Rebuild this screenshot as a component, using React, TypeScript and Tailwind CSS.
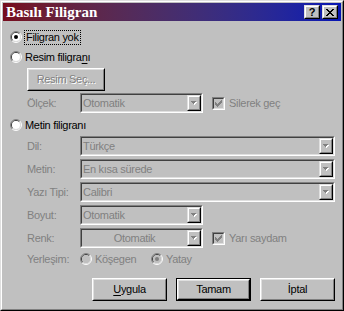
import React from "react";

function Radio({ checked = false, disabled = false }: { checked?: boolean; disabled?: boolean }) {
  const fill = disabled ? "#c0c0c0" : "#ffffff";
  const dot = disabled ? "#808080" : "#000000";
  return (
    <svg width="12" height="12" viewBox="0 0 12 12" className="shrink-0 block">
      <path d="M2.111 9.889 A5.5 5.5 0 0 1 9.889 2.111" stroke="#808080" fill="none" />
      <path d="M9.889 2.111 A5.5 5.5 0 0 1 2.111 9.889" stroke="#ffffff" fill="none" />
      <path d="M2.818 9.182 A4.5 4.5 0 0 1 9.182 2.818" stroke="#404040" fill="none" />
      <path d="M9.182 2.818 A4.5 4.5 0 0 1 2.818 9.182" stroke="#dfdfdf" fill="none" />
      <circle cx="6" cy="6" r="4" fill={fill} />
      {checked && <circle cx="6" cy="6" r="2" fill={dot} />}
    </svg>
  );
}

function CheckBox({ checked = false }: { checked?: boolean }) {
  const px: [number, number, number][] = [
    [6, 0, 1],
    [5, 1, 2],
    [0, 2, 1],
    [4, 2, 3],
    [0, 3, 2],
    [3, 3, 3],
    [0, 4, 5],
    [1, 5, 3],
    [2, 6, 1],
  ];
  return (
    <div className="w-[13px] h-[13px] shrink-0 border border-t-[#808080] border-l-[#808080] border-r-white border-b-white">
      <div className="w-full h-full border border-t-[#404040] border-l-[#404040] border-r-[#dfdfdf] border-b-[#dfdfdf] bg-[#c0c0c0] flex items-center justify-center">
        {checked && (
          <svg width="7" height="7" viewBox="0 0 7 7" className="block" shapeRendering="crispEdges">
            {px.map(([x, y, w], i) => (
              <rect key={i} x={x} y={y} width={w} height={1} fill="#808080" />
            ))}
          </svg>
        )}
      </div>
    </div>
  );
}

function DropArrow() {
  return (
    <svg width="6" height="4" viewBox="0 0 6 4" className="block" shapeRendering="crispEdges">
      <rect x="1" y="1" width="5" height="1" fill="#ffffff" />
      <rect x="2" y="2" width="3" height="1" fill="#ffffff" />
      <rect x="3" y="3" width="1" height="1" fill="#ffffff" />
      <rect x="0" y="0" width="5" height="1" fill="#808080" />
      <rect x="1" y="1" width="3" height="1" fill="#808080" />
      <rect x="2" y="2" width="1" height="1" fill="#808080" />
    </svg>
  );
}

function Combo({ value, wide = false, center = false }: { value: string; wide?: boolean; center?: boolean }) {
  return (
    <div
      className={`${wide ? "w-[255px]" : "w-[123px]"} h-[20px] shrink-0 border border-t-[#808080] border-l-[#808080] border-r-white border-b-white`}
    >
      <div className="w-full h-full flex border border-t-[#404040] border-l-[#404040] border-r-[#dfdfdf] border-b-[#dfdfdf] bg-[#c0c0c0]">
        <div
          className={`flex-1 flex items-center text-[#808080] leading-none ${center ? "justify-center" : "pl-[1px]"}`}
        >
          {value}
        </div>
        <div className="w-[14px] h-full border border-t-[#dfdfdf] border-l-[#dfdfdf] border-r-black border-b-black">
          <div className="w-full h-full border border-t-white border-l-white border-r-[#808080] border-b-[#808080] flex items-center justify-center">
            <DropArrow />
          </div>
        </div>
      </div>
    </div>
  );
}

function PushButton({ children, def = false }: { children: React.ReactNode; def?: boolean }) {
  const inner = (
    <div className="w-full h-full border border-t-white border-l-white border-r-black border-b-black">
      <div className="w-full h-full border border-t-[#dfdfdf] border-l-[#dfdfdf] border-r-[#808080] border-b-[#808080] flex items-center justify-center text-black">
        {children}
      </div>
    </div>
  );
  if (def) {
    return <div className="w-[75px] h-[23px] border border-black">{inner}</div>;
  }
  return <div className="w-[75px] h-[23px]">{inner}</div>;
}

function TitleBtn({ children }: { children: React.ReactNode }) {
  return (
    <div className="w-[16px] h-[14px] border border-t-[#dfdfdf] border-l-[#dfdfdf] border-r-black border-b-black">
      <div className="w-full h-full border border-t-white border-l-white border-r-[#808080] border-b-[#808080] bg-[#c0c0c0] flex items-center justify-center">
        {children}
      </div>
    </div>
  );
}

function XGlyph() {
  const rows: [number, number][][] = [
    [[0, 2], [6, 2]],
    [[1, 2], [5, 2]],
    [[2, 4]],
    [[3, 2]],
    [[2, 4]],
    [[1, 2], [5, 2]],
    [[0, 2], [6, 2]],
  ];
  return (
    <svg width="8" height="7" viewBox="0 0 8 7" className="block" shapeRendering="crispEdges">
      {rows.map((r, y) =>
        r.map(([x, w], i) => <rect key={`${y}-${i}`} x={x} y={y} width={w} height={1} fill="#000" />)
      )}
    </svg>
  );
}

function Label({ children }: { children: React.ReactNode }) {
  return <div className="w-[77px] shrink-0 pl-[24px] text-[#808080] leading-none">{children}</div>;
}

export default function App() {
  return (
    <div className="w-[344px] h-[311px] font-['Liberation_Sans',Arial,sans-serif] text-[11px] tracking-[-0.3px] text-black select-none">
      <div className="w-full h-full border border-t-[#dfdfdf] border-l-[#dfdfdf] border-r-black border-b-black">
        <div className="w-full h-full border border-t-white border-l-white border-r-[#808080] border-b-[#808080] p-[1px] bg-[#c0c0c0] flex flex-col">
          {/* Title bar */}
          <div className="h-[18px] shrink-0 flex items-center bg-linear-to-r from-[#760a1c] to-[#0614b4]">
            <span className="ml-[3px] text-white font-bold text-[15px] tracking-normal leading-none font-['Liberation_Serif','Times_New_Roman',serif]">
              Basılı Filigran
            </span>
            <div className="ml-auto mr-[3px] flex gap-[2px]">
              <TitleBtn>
                <span className="font-bold text-[11px] leading-none tracking-normal">?</span>
              </TitleBtn>
              <TitleBtn>
                <XGlyph />
              </TitleBtn>
            </div>
          </div>

          {/* Body */}
          <div className="flex-1 flex flex-col">
            <div className="mt-[9px] h-[14px] flex items-center pl-[7px]">
              <Radio checked />
              <span className="ml-[2px] h-[15px] flex items-center border border-dotted border-black px-[1px] leading-none">
                Filigran yok
              </span>
            </div>

            <div className="mt-[6px] h-[14px] flex items-center pl-[7px]">
              <Radio />
              <span className="ml-[3px] leading-none">
                Resim filigra<span className="underline underline-offset-2">n</span>ı
              </span>
            </div>

            <div className="mt-[4px] ml-[24px] w-[78px] h-[23px] border border-t-white border-l-white border-r-black border-b-black">
              <div className="w-full h-full border border-t-[#dfdfdf] border-l-[#dfdfdf] border-r-[#808080] border-b-[#808080] flex items-center justify-center text-[#808080] [text-shadow:1px_1px_0_#ffffff]">
                Resim Seç...
              </div>
            </div>

            <div className="mt-[2px] h-[20px] flex items-center">
              <Label>Ölçek:</Label>
              <Combo value="Otomatik" />
              <div className="ml-[9px]">
                <CheckBox checked />
              </div>
              <span className="ml-[4px] text-[#808080] leading-none">Silerek geç</span>
            </div>

            <div className="mt-[5px] h-[14px] flex items-center pl-[7px]">
              <Radio />
              <span className="ml-[3px] leading-none">Metin filigranı</span>
            </div>

            <div className="mt-[4px] h-[20px] flex items-center">
              <Label>Dil:</Label>
              <Combo value="Türkçe" wide />
            </div>
            <div className="mt-[3px] h-[20px] flex items-center">
              <Label>Metin:</Label>
              <Combo value="En kısa sürede" wide />
            </div>
            <div className="mt-[3px] h-[20px] flex items-center">
              <Label>Yazı Tipi:</Label>
              <Combo value="Calibri" wide />
            </div>
            <div className="mt-[3px] h-[20px] flex items-center">
              <Label>Boyut:</Label>
              <Combo value="Otomatik" />
            </div>
            <div className="mt-[3px] h-[20px] flex items-center">
              <Label>Renk:</Label>
              <Combo value="Otomatik" center />
              <div className="ml-[9px]">
                <CheckBox checked />
              </div>
              <span className="ml-[4px] text-[#808080] leading-none">Yarı saydam</span>
            </div>

            <div className="mt-[4px] h-[14px] flex items-center">
              <Label>Yerleşim:</Label>
              <div className="w-[71px] flex items-center">
                <Radio disabled />
                <span className="ml-[3px] text-[#808080] leading-none">Köşegen</span>
              </div>
              <Radio disabled checked />
              <span className="ml-[3px] text-[#808080] leading-none">Yatay</span>
            </div>

            <div className="mt-[12px] flex justify-end pr-[6px] gap-[9px]">
              <PushButton>
                <span>
                  <span className="underline underline-offset-2">U</span>ygula
                </span>
              </PushButton>
              <PushButton def>Tamam</PushButton>
              <PushButton>İptal</PushButton>
            </div>
          </div>
        </div>
      </div>
    </div>
  );
}
